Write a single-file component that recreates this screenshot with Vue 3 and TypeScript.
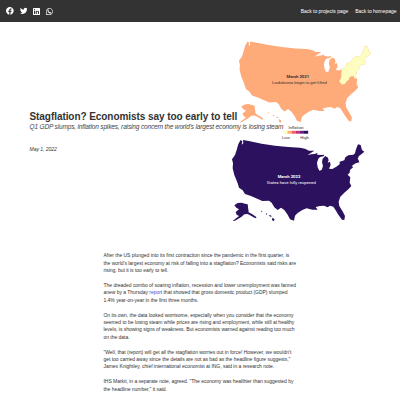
<script setup lang="ts">
const paragraphs: string[][] = [
  [
    'After the US plunged into its first contraction since the pandemic in the first quarter, is',
    "the world's largest economy at risk of falling into a stagflation? Economists said risks are",
    'rising, but it is too early to tell.',
  ],
  [
    'The dreaded combo of soaring inflation, recession and lower unemployment was fanned',
    'anew by a Thursday |report| that showed that gross domestic product (GDP) slumped',
    '1.4% year-on-year in the first three months.',
  ],
  [
    'On its own, the data looked worrisome, especially when you consider that the economy',
    'seemed to be losing steam while prices are rising and employment, while still at healthy',
    'levels, is showing signs of weakness. But economists warned against reading too much',
    'on the data.',
  ],
  [
    '"Well, that (report) will get all the stagflation worries out in force! However, we wouldn\'t',
    'get too carried away since the details are not as bad as the headline figure suggests,"',
    'James Knightley, chief international economist at ING, said in a research note.',
  ],
  [
    'IHS Markit, in a separate note, agreed. "The economy was healthier than suggested by',
    'the headline number," it said.',
  ],
]
const legend = ['#fcfdbf', '#feb078', '#f1605d', '#b73779', '#721f81', '#2c115f']
</script>

<template>
  <div class="page">
    <nav class="bar">
      <div class="social">
        <svg viewBox="0 0 24 24"><path d="M24 12.07C24 5.4 18.63 0 12 0S0 5.4 0 12.07C0 18.1 4.39 23.1 10.13 24v-8.44H7.08v-3.49h3.05V9.41c0-3.02 1.79-4.69 4.53-4.69 1.31 0 2.68.24 2.68.24v2.97h-1.51c-1.49 0-1.96.93-1.96 1.89v2.25h3.33l-.53 3.49h-2.8V24C19.61 23.1 24 18.1 24 12.07z" /></svg>
        <svg viewBox="0 0 24 24"><path d="M24 4.56a9.8 9.8 0 0 1-2.83.78 4.93 4.93 0 0 0 2.17-2.73 9.9 9.9 0 0 1-3.13 1.2 4.92 4.92 0 0 0-8.38 4.48A13.97 13.97 0 0 1 1.67 3.15a4.92 4.92 0 0 0 1.52 6.57 4.9 4.9 0 0 1-2.23-.61v.06a4.92 4.92 0 0 0 3.95 4.83 5 5 0 0 1-2.22.08 4.93 4.93 0 0 0 4.6 3.42A9.87 9.87 0 0 1 0 19.54a13.94 13.94 0 0 0 7.55 2.21c9.05 0 14-7.5 14-13.99l-.01-.63A10 10 0 0 0 24 4.56z" /></svg>
        <svg class="small" viewBox="0 0 24 24"><path fill-rule="evenodd" d="M2 0h20a2 2 0 0 1 2 2v20a2 2 0 0 1-2 2H2a2 2 0 0 1-2-2V2a2 2 0 0 1 2-2zm1.6 9v11.4h3.5V9zm1.7-5.6a2 2 0 1 0 0 4.1 2 2 0 0 0 0-4.1zM9.4 9v11.4h3.5v-5.7c0-3.5 4-3.5 4 0v5.7h3.5v-6.7c0-5.4-5.7-5.6-7.6-2.9V9z" /></svg>
        <svg class="small" viewBox="0 0 24 24"><path fill-rule="evenodd" d="M0 24l1.7-6.2A11.9 11.9 0 1 1 7.6 23zm6.6-3.8.4.2a9.9 9.9 0 1 0-3.2-3.1l.2.4-1 3.6zM17.5 14.4c-.3-.2-1.8-.9-2-1-.3-.1-.5-.1-.7.2l-.9 1.1c-.2.2-.3.3-.6.1-2.4-1-3.7-2-5.1-4.2-.2-.5.6-.8 1.1-1.9.1-.2 0-.4 0-.5L8.4 6c-.3-.6-.6-.5-.8-.5-1 0-2.5.8-2.5 3.4 0 1.8 1.3 3.5 1.5 3.7 3.3 5 6.4 6 8.9 6 1.6-.2 2.9-1.4 3.1-2.8.1-.9-.4-.9-1.1-1.4z" /></svg>
      </div>
      <div class="links"><a>Back to projects page</a><a>Back to homepage</a></div>
    </nav>

    <header class="hero">
      <svg class="maps" viewBox="225 22 160 210">
        <defs>
          <path id="mainland" d="M47 60L52 64 50 74 55 70 54 60 75 64 110 71 150 77 190 81 225 83 240 86 252 92 268 92 256 100 248 106 258 103 268 102 278 99 276 104 290 105 298 104 296 109 285 111 280 116 276 128 278 142 283 152 290 150 294 138 291 126 293 116 301 108 309 113 311 121 308 128 315 125 317 135 312 146 322 147 334 140 344 133 344 125 358 121 361 112 370 106 385 104 390 100 393 88 399 73 407 75 411 90 418 95 410 102 402 108 398 116 401 121 403 127 392 130 385 134 380 139 385 141 375 150 374 158 368 164 376 172 374 188 379 198 370 208 358 218 346 230 341 245 343 258 354 276 360 288 358 300 351 299 340 284 332 271 325 260 315 257 308 262 297 257 285 258 272 261 278 269 262 269 245 265 232 270 218 279 210 287 207 302 195 298 188 284 178 270 168 263 158 270 148 262 140 248 132 242 112 243 78 228 60 222 53 211 42 203 38 190 32 175 28 165 23 145 24 130 21 118 30 105 35 90 40 72z" />
          <path id="islands" d="M28 256L38 249 50 248 60 251 68 253 71 277 82 283 95 292 91 295 78 287 68 282 58 283 50 290 30 302 23 303 42 288 35 284 32 276 42 268 34 263zM108 272l4 2-2 3zM122 280l5 1-2 4zM131 285l5 1 5 3-5 1zM142 293l7 5-3 6-5-4z" />
          <clipPath id="coast"><use href="#mainland" /></clipPath>
        </defs>
        <g transform="translate(231.9 21.4) scale(.3333)" fill="#ffaa79">
          <use href="#mainland" /><use href="#islands" />
          <path clip-path="url(#coast)" fill="#fcfdbf" d="M330 115L425 60 425 130 395 150 378 170 369 172 364 164 354 166 351 174 343 181 339 188 330 189 322 180 328 168 329 140z" />
        </g>
        <g transform="translate(225 120) scale(.3333)" fill="#2c115f"><use href="#mainland" /><use href="#islands" /></g>
        <g class="map-label dark"><text x="297.8" y="78.3" class="strong">March 2021</text><text x="299.4" y="84.2">Lockdowns begin to get lifted</text></g>
        <g class="map-label light"><text x="289" y="177.5" class="strong">March 2022</text><text x="291.3" y="184.1">States have fully reopened</text></g>
        <g class="map-label dark"><text x="296" y="129.2">Inflation</text><text x="286" y="139.2">Low</text><text x="304.5" y="139.2">High</text></g>
        <rect v-for="(c, i) in legend" :key="c" :x="283.4 + i * 4.12" y="130.8" width="4.15" height="2.9" :fill="c" />
      </svg>
      <div class="heading">
        <h1>Stagflation? Economists say too early to tell</h1>
        <p class="sub">Q1 GDP slumps, inflation spikes, raising concern the world's largest economy is losing steam</p>
        <p class="date">May 1, 2022</p>
      </div>
    </header>

    <main class="story">
      <p v-for="(lines, i) in paragraphs" :key="i">
        <span v-for="line in lines" :key="line" class="line"><template v-for="(part, k) in line.split('|')" :key="k"><a v-if="k === 1">{{ part }}</a><template v-else>{{ part }}</template></template></span>
      </p>
    </main>
  </div>
</template>

<style>
body { background: #fff; overflow: hidden; }
</style>
<style scoped>
.page { height: 400px; overflow: hidden; font-family: "Liberation Sans", Arial, sans-serif; color: #333; }
.bar { height: 22px; background: #333; display: flex; align-items: center; justify-content: space-between; padding: 0 3.6px 0 6px; box-sizing: border-box; }
.social { display: flex; align-items: center; gap: 6px; }
.social svg { width: 7.7px; height: 7.7px; fill: #fff; display: block; }
.social .small { width: 7px; height: 7px; }
.links { display: flex; gap: 7px; font-size: 5px; letter-spacing: -0.03px; color: #fff; }
.hero { display: grid; height: 210px; }
.maps { grid-area: 1 / 1; width: 160px; height: 210px; margin-left: 225px; display: block; }
.heading { grid-area: 1 / 1; padding: 88px 0 0 29.5px; z-index: 1; white-space: nowrap; }
h1 { margin: 0; font-size: 10px; letter-spacing: -0.065px; line-height: 13px; font-weight: 700; }
.sub { margin: 0; font-size: 6.5px; letter-spacing: -0.15px; line-height: 8px; font-style: italic; color: #444; }
.date { margin: 14px 0 0; font-size: 5px; letter-spacing: -0.03px; line-height: 8px; font-style: italic; }
.map-label { font-family: Roboto, sans-serif; font-size: 4.2px; text-anchor: middle; }
.strong { font-weight: 700; }
.dark { fill: #333; }
.light { fill: #fff; }
.story { padding: 20.3px 0 0 103.5px; font-size: 5px; letter-spacing: -0.03px; line-height: 7.4px; color: #333; white-space: nowrap; }
.story p { margin: 0 0 7.4px; }
.line { display: block; }
.story a { color: #4b4bc8; }
</style>
